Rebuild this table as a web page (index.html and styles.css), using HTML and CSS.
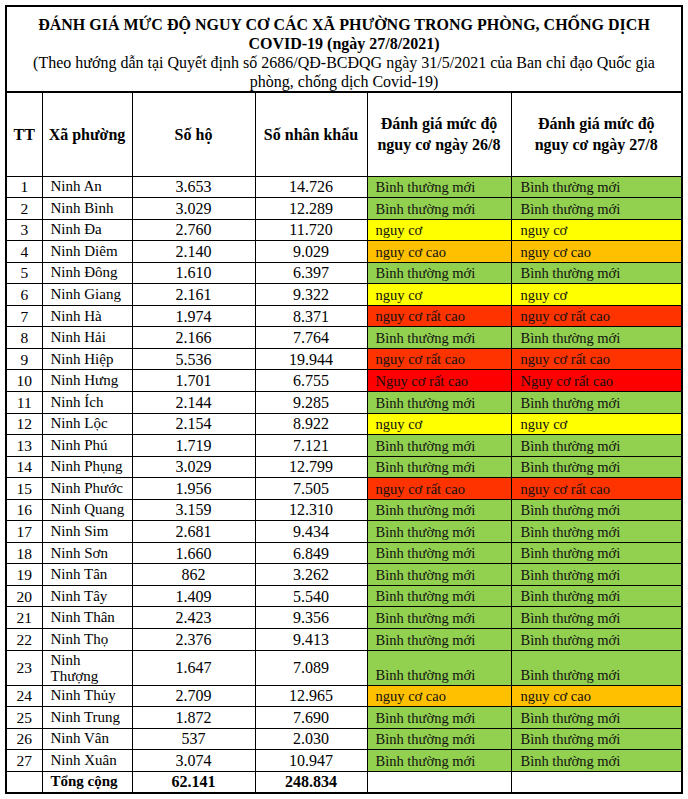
FILE: index.html
```html
<!DOCTYPE html>
<html lang="vi">
<head>
<meta charset="utf-8">
<title>Đánh giá mức độ nguy cơ</title>
<link rel="stylesheet" href="styles.css">
</head>
<body>
<div class="page">
  <div class="caption"><span>Biểu 1:</span></div>
  <table class="risk">
    <colgroup>
      <col class="c-tt"><col class="c-name"><col class="c-ho"><col class="c-nk"><col class="c-d26"><col class="c-d27">
    </colgroup>
    <tr class="title-row">
      <td colspan="6" class="title">
        <div class="title-main">ĐÁNH GIÁ MỨC ĐỘ NGUY CƠ CÁC XÃ PHƯỜNG TRONG PHÒNG, CHỐNG DỊCH<br>COVID-19 (ngày 27/8/2021)</div>
        <div class="title-sub">(Theo hướng dẫn tại Quyết định số 2686/QĐ-BCĐQG ngày 31/5/2021 của Ban chỉ đạo Quốc gia<br>phòng, chống dịch Covid-19)</div>
      </td>
    </tr>
    <tr class="head-row">
      <th>TT</th>
      <th>Xã phường</th>
      <th>Số hộ</th>
      <th>Số nhân khẩu</th>
      <th>Đánh giá mức độ<br>nguy cơ ngày 26/8</th>
      <th>Đánh giá mức độ<br>nguy cơ ngày 27/8</th>
    </tr>
    <tr><td class="tt">1</td><td class="name">Ninh An</td><td class="num">3.653</td><td class="num">14.726</td><td class="lv green">Bình thường mới</td><td class="lv green">Bình thường mới</td></tr>
    <tr><td class="tt">2</td><td class="name">Ninh Bình</td><td class="num">3.029</td><td class="num">12.289</td><td class="lv green">Bình thường mới</td><td class="lv green">Bình thường mới</td></tr>
    <tr><td class="tt">3</td><td class="name">Ninh Đa</td><td class="num">2.760</td><td class="num">11.720</td><td class="lv yellow">nguy cơ</td><td class="lv yellow">nguy cơ</td></tr>
    <tr><td class="tt">4</td><td class="name">Ninh Diêm</td><td class="num">2.140</td><td class="num">9.029</td><td class="lv orange">nguy cơ cao</td><td class="lv orange">nguy cơ cao</td></tr>
    <tr><td class="tt">5</td><td class="name">Ninh Đông</td><td class="num">1.610</td><td class="num">6.397</td><td class="lv green">Bình thường mới</td><td class="lv green">Bình thường mới</td></tr>
    <tr><td class="tt">6</td><td class="name">Ninh Giang</td><td class="num">2.161</td><td class="num">9.322</td><td class="lv yellow">nguy cơ</td><td class="lv yellow">nguy cơ</td></tr>
    <tr><td class="tt">7</td><td class="name">Ninh Hà</td><td class="num">1.974</td><td class="num">8.371</td><td class="lv redorange">nguy cơ rất cao</td><td class="lv redorange">nguy cơ rất cao</td></tr>
    <tr><td class="tt">8</td><td class="name">Ninh Hải</td><td class="num">2.166</td><td class="num">7.764</td><td class="lv green">Bình thường mới</td><td class="lv green">Bình thường mới</td></tr>
    <tr><td class="tt">9</td><td class="name">Ninh Hiệp</td><td class="num">5.536</td><td class="num">19.944</td><td class="lv redorange">nguy cơ rất cao</td><td class="lv redorange">nguy cơ rất cao</td></tr>
    <tr><td class="tt">10</td><td class="name">Ninh Hưng</td><td class="num">1.701</td><td class="num">6.755</td><td class="lv red">Nguy cơ rất cao</td><td class="lv red">Nguy cơ rất cao</td></tr>
    <tr><td class="tt">11</td><td class="name">Ninh Ích</td><td class="num">2.144</td><td class="num">9.285</td><td class="lv green">Bình thường mới</td><td class="lv green">Bình thường mới</td></tr>
    <tr><td class="tt">12</td><td class="name">Ninh Lộc</td><td class="num">2.154</td><td class="num">8.922</td><td class="lv yellow">nguy cơ</td><td class="lv yellow">nguy cơ</td></tr>
    <tr><td class="tt">13</td><td class="name">Ninh Phú</td><td class="num">1.719</td><td class="num">7.121</td><td class="lv green">Bình thường mới</td><td class="lv green">Bình thường mới</td></tr>
    <tr><td class="tt">14</td><td class="name">Ninh Phụng</td><td class="num">3.029</td><td class="num">12.799</td><td class="lv green">Bình thường mới</td><td class="lv green">Bình thường mới</td></tr>
    <tr><td class="tt">15</td><td class="name">Ninh Phước</td><td class="num">1.956</td><td class="num">7.505</td><td class="lv redorange">nguy cơ rất cao</td><td class="lv redorange">nguy cơ rất cao</td></tr>
    <tr><td class="tt">16</td><td class="name">Ninh Quang</td><td class="num">3.159</td><td class="num">12.310</td><td class="lv green">Bình thường mới</td><td class="lv green">Bình thường mới</td></tr>
    <tr><td class="tt">17</td><td class="name">Ninh Sim</td><td class="num">2.681</td><td class="num">9.434</td><td class="lv green">Bình thường mới</td><td class="lv green">Bình thường mới</td></tr>
    <tr><td class="tt">18</td><td class="name">Ninh Sơn</td><td class="num">1.660</td><td class="num">6.849</td><td class="lv green">Bình thường mới</td><td class="lv green">Bình thường mới</td></tr>
    <tr><td class="tt">19</td><td class="name">Ninh Tân</td><td class="num">862</td><td class="num">3.262</td><td class="lv green">Bình thường mới</td><td class="lv green">Bình thường mới</td></tr>
    <tr><td class="tt">20</td><td class="name">Ninh Tây</td><td class="num">1.409</td><td class="num">5.540</td><td class="lv green">Bình thường mới</td><td class="lv green">Bình thường mới</td></tr>
    <tr><td class="tt">21</td><td class="name">Ninh Thân</td><td class="num">2.423</td><td class="num">9.356</td><td class="lv green">Bình thường mới</td><td class="lv green">Bình thường mới</td></tr>
    <tr><td class="tt">22</td><td class="name">Ninh Thọ</td><td class="num">2.376</td><td class="num">9.413</td><td class="lv green">Bình thường mới</td><td class="lv green">Bình thường mới</td></tr>
    <tr class="tall"><td class="tt">23</td><td class="name wrap">Ninh<br>Thượng</td><td class="num">1.647</td><td class="num">7.089</td><td class="lv green">Bình thường mới</td><td class="lv green">Bình thường mới</td></tr>
    <tr><td class="tt">24</td><td class="name">Ninh Thủy</td><td class="num">2.709</td><td class="num">12.965</td><td class="lv orange">nguy cơ cao</td><td class="lv orange">nguy cơ cao</td></tr>
    <tr><td class="tt">25</td><td class="name">Ninh Trung</td><td class="num">1.872</td><td class="num">7.690</td><td class="lv green">Bình thường mới</td><td class="lv green">Bình thường mới</td></tr>
    <tr><td class="tt">26</td><td class="name">Ninh Vân</td><td class="num">537</td><td class="num">2.030</td><td class="lv green">Bình thường mới</td><td class="lv green">Bình thường mới</td></tr>
    <tr><td class="tt">27</td><td class="name">Ninh Xuân</td><td class="num">3.074</td><td class="num">10.947</td><td class="lv green">Bình thường mới</td><td class="lv green">Bình thường mới</td></tr>
    <tr class="total"><td class="tt"></td><td class="name">Tổng cộng</td><td class="num">62.141</td><td class="num">248.834</td><td class="lv"></td><td class="lv"></td></tr>
  </table>
</div>
</body>
</html>
```

FILE: styles.css
```css
html, body {
  margin: 0;
  padding: 0;
  background: #ffffff;
}

body {
  font-family: "Liberation Serif", "Times New Roman", serif;
  color: #000000;
}

.page {
  padding-left: 5px;
}

.caption {
  height: 5px;
  overflow: hidden;
  font-size: 15px;
  font-weight: bold;
  line-height: 17px;
}

.caption span {
  display: block;
  margin-top: -13px;
}

.risk {
  width: 676px;
  border-collapse: collapse;
  table-layout: fixed;
  border: 2px solid #000;
  font-family: "Liberation Serif", "Times New Roman", serif;
}

.c-tt { width: 36px; }
.c-name { width: 90px; }
.c-ho { width: 123px; }
.c-nk { width: 112px; }
.c-d26 { width: 144px; }
.c-d27 { width: 171px; }

.risk td,
.risk th {
  border: 1px solid #000;
  padding: 0;
  font-size: 15px;
  line-height: 17px;
}

.risk tr {
  height: 21.55px;
}

.risk .title-row { height: 86px; }
.risk .head-row { height: 84px; }
.risk .tall { height: 35px; }

.risk .title {
  border-bottom: 2px solid #000;
  text-align: center;
  vertical-align: top;
  padding-top: 8px;
  font-size: 16px;
  line-height: 19px;
}

.title-main {
  font-weight: bold;
}

.risk th {
  font-weight: bold;
  text-align: center;
  vertical-align: middle;
  font-size: 16px;
  line-height: 21px;
}

.risk .tt {
  text-align: center;
  font-size: 15.5px;
}

.risk .name {
  padding-left: 8px;
  text-align: left;
  white-space: nowrap;
}

.risk .name.wrap {
  line-height: 16px;
}

.risk .num {
  text-align: center;
  font-size: 16px;
}

.risk .lv {
  text-align: left;
  vertical-align: bottom;
  padding-left: 8px;
  padding-bottom: 1px;
  font-size: 14.5px;
  white-space: nowrap;
  color: #111;
}

.risk .lv:last-child {
  padding-left: 9px;
}

.green { background: #92d050; }
.yellow { background: #ffff00; }
.orange { background: #ffc000; }
.redorange { background: #ff3300; }
.red { background: #ff0000; }

.risk .total td {
  font-weight: bold;
}
```
